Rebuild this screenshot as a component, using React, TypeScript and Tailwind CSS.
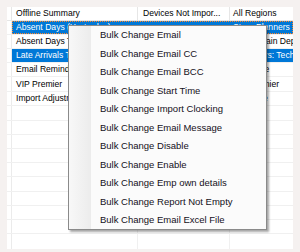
import React from "react";

const rows: { h: string; c1: string; c2: string; c3: string; sel?: boolean; focus?: boolean; last?: boolean }[] = [
  { h: "h-[14px]", c1: "Absent Days (Yesterday)", c2: "", c3: "Store Planners", sel: true, focus: true },
  { h: "h-[14px]", c1: "Absent Days Today", c2: "", c3: "Leeds Main Depot" },
  { h: "h-[14px]", c1: "Late Arrivals Today", c2: "", c3: "Engineers: Tech", sel: true },
  { h: "h-[14px]", c1: "Email Reminder", c2: "", c3: "Purchase" },
  { h: "h-[15px]", c1: "VIP Premier", c2: "", c3: "VIP Premier" },
  { h: "h-[14px]", c1: "Import Adjustments", c2: "", c3: "Overtime" },
  { h: "h-[15px]", c1: "", c2: "", c3: "" },
  { h: "h-[14px]", c1: "", c2: "", c3: "" },
  { h: "h-[14px]", c1: "", c2: "", c3: "" },
  { h: "h-[14px]", c1: "", c2: "", c3: "" },
  { h: "h-[14px]", c1: "", c2: "", c3: "" },
  { h: "h-[15px]", c1: "", c2: "", c3: "" },
  { h: "h-[14px]", c1: "", c2: "", c3: "" },
  { h: "h-[14px]", c1: "", c2: "", c3: "" },
  { h: "h-[14px]", c1: "", c2: "", c3: "" },
  { h: "h-[15px]", c1: "", c2: "", c3: "", last: true },
];

const items = [
  "Bulk Change Email",
  "Bulk Change Email CC",
  "Bulk Change Email BCC",
  "Bulk Change Start Time",
  "Bulk Change Import Clocking",
  "Bulk Change Email Message",
  "Bulk Change Disable",
  "Bulk Change Enable",
  "Bulk Change Emp own details",
  "Bulk Change Report Not Empty",
  "Bulk Change Email Excel File",
];

export default function App() {
  return (
    <div
      className="w-[300px] h-[252px] bg-[#f5f1f0] pt-[7px] pl-[7px] overflow-hidden"
      style={{ fontFamily: '"Liberation Sans", Arial, sans-serif' }}
    >
      <div className="relative w-[286px] h-[242px] bg-white flex flex-col text-[8.6px] leading-none text-black">
        {/* header */}
        <div className="flex h-[14px] border-b border-[#e6e6e6] shrink-0">
          <div className="w-[5px] border-r border-[#e6e6e6]" />
          <div className="w-[126px] border-r border-[#e6e6e6] flex items-center pl-[4px] whitespace-nowrap overflow-hidden">
            Offline Summary
          </div>
          <div className="w-[92px] border-r border-[#e6e6e6] flex items-center pl-[5px] whitespace-nowrap overflow-hidden">
            Devices Not Impor...
          </div>
          <div className="flex-1 flex items-center pl-[3px] whitespace-nowrap overflow-hidden">All Regions</div>
        </div>
        {rows.map((r, i) => (
          <div
            key={i}
            className={`flex ${r.h} shrink-0 ${r.last ? "" : "border-b border-[#f0f0f0]"}`}
          >
            <div className="w-[5px] border-r border-[#ebebeb]" />
            <div
              className={`relative flex flex-1 min-w-0 ${r.sel ? "bg-[#0078d7] text-white" : ""}`}
            >
              <div
                className={`w-[126px] shrink-0 border-r ${r.sel ? "border-[#0078d7]" : "border-[#f0f0f0]"} flex items-center pl-[4px] whitespace-nowrap overflow-hidden`}
              >
                {r.c1}
              </div>
              <div
                className={`w-[92px] shrink-0 border-r ${r.sel ? "border-[#0078d7]" : "border-[#f0f0f0]"} flex items-center pl-[5px] whitespace-nowrap overflow-hidden`}
              >
                {r.c2}
              </div>
              <div className="flex-1 min-w-0 flex items-center pl-[3px] whitespace-nowrap overflow-hidden">{r.c3}</div>
              {r.focus && (
                <div className="absolute inset-0 border border-dotted border-[#ff8728] pointer-events-none" />
              )}
            </div>
          </div>
        ))}

        {/* context menu */}
        <div
          className="absolute left-[61px] top-[18px] w-[199px] h-[205px] border border-[#8a8a8a] bg-[#fbfbfb] shadow-[2px_2px_2px_rgba(0,0,0,0.35)] flex"
        >
          <div className="w-[22px] h-full bg-gradient-to-r from-[#f8f8f8] to-[#ececec]" />
          <div className="flex-1 flex flex-col pl-[9px] text-[9.5px] text-[#14101a]">
            {items.map((t) => (
              <div key={t} className="h-[18.5px] flex items-center whitespace-nowrap">
                {t}
              </div>
            ))}
          </div>
        </div>
      </div>
    </div>
  );
}
